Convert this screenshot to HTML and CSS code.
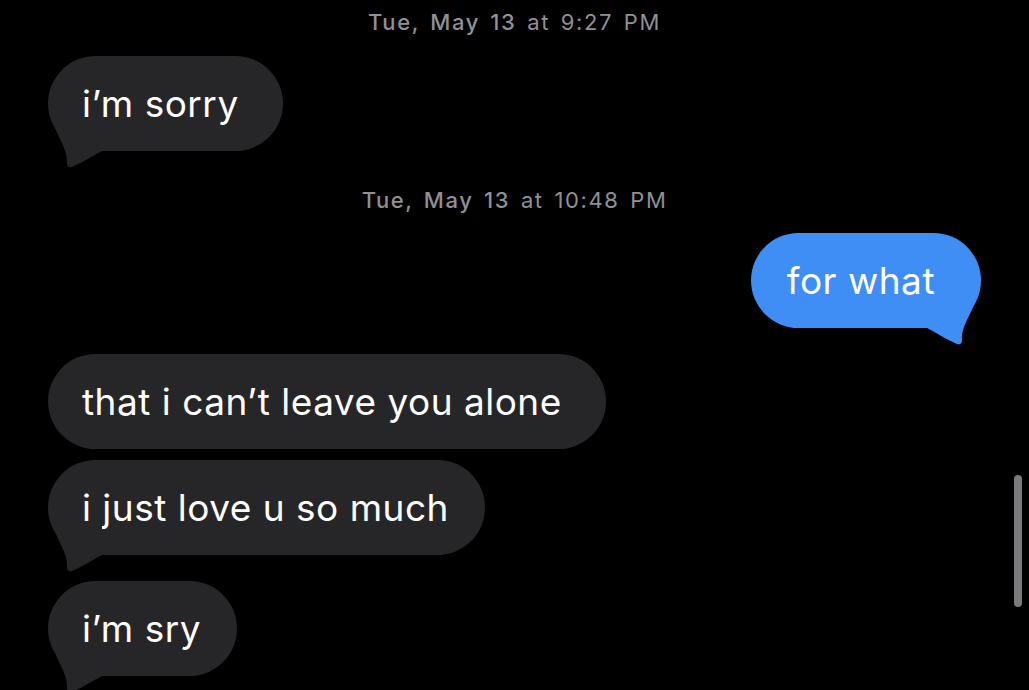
FILE: index.html
```html
<!DOCTYPE html>
<html>
<head>
<meta charset="utf-8">
<link rel="stylesheet" href="styles.css">
</head>
<body>
<div class="thread">
  <div class="stamp stamp-first"><b>Tue, May 13</b> at 9:27 PM</div>
  <div class="row in">
    <div class="bubble gray">i’m sorry
      <svg class="tail" viewBox="0 0 60 50" width="60" height="50"><path d="M4 0 C8 18 20 30 19 45 C19 49 21 50 24 49 C34 45 44 38 54 33 L54 0 Z"/></svg>
    </div>
  </div>
  <div class="stamp stamp-second"><b>Tue, May 13</b> at 10:48 PM</div>
  <div class="row out">
    <div class="bubble blue">for what
      <svg class="tail tail-out" viewBox="0 0 60 50" width="60" height="50"><path d="M4 0 C8 18 20 30 19 45 C19 49 21 50 24 49 C34 45 44 38 54 33 L54 0 Z"/></svg>
    </div>
  </div>
  <div class="row in gap-lg">
    <div class="bubble gray">that i can’t leave you alone</div>
  </div>
  <div class="row in gap-sm">
    <div class="bubble gray tight">i just love u so much
      <svg class="tail" viewBox="0 0 60 50" width="60" height="50"><path d="M4 0 C8 18 20 30 19 45 C19 49 21 50 24 49 C34 45 44 38 54 33 L54 0 Z"/></svg>
    </div>
  </div>
  <div class="row in gap-lg">
    <div class="bubble gray tight">i’m sry
      <svg class="tail" viewBox="0 0 60 50" width="60" height="50"><path d="M4 0 C8 18 20 30 19 45 C19 49 21 50 24 49 C34 45 44 38 54 33 L54 0 Z"/></svg>
    </div>
  </div>
</div>
<div class="scrollbar"></div>
</body>
</html>
```
FILE: styles.css
```css
html, body {
  margin: 0;
  padding: 0;
  background: #000;
  height: 690px;
  overflow: hidden;
}
body {
  font-family: Inter, "Noto Sans", sans-serif;
  position: relative;
}
.thread {
  display: flex;
  flex-direction: column;
  padding: 0 48px;
}
.stamp {
  text-align: center;
  color: #909096;
  font-size: 22px;
  letter-spacing: 1.6px;
  word-spacing: 3px;
  line-height: 30px;
  height: 30px;
}
.stamp b {
  font-weight: 500;
}
.stamp-first {
  margin-top: 7px;
  margin-bottom: 19px;
}
.stamp-second {
  margin-top: 34px;
  margin-bottom: 18px;
}
.row {
  display: flex;
}
.row.out {
  justify-content: flex-end;
}
.gap-lg {
  margin-top: 26px;
}
.gap-sm {
  margin-top: 11px;
}
.bubble {
  position: relative;
  height: 95px;
  box-sizing: border-box;
  display: flex;
  align-items: center;
  padding: 0 44px 0 34px;
  border-radius: 48px;
  font-size: 37px;
  letter-spacing: 0.5px;
  color: #fff;
  white-space: nowrap;
}
.bubble.tight {
  padding-right: 36px;
}
.gray {
  background: #262628;
}
.gray .tail {
  fill: #262628;
}
.blue {
  background: #3e8ef5;
  padding: 0 46px 0 36px;
}
.blue .tail {
  fill: #3e8ef5;
}
.tail {
  position: absolute;
  left: 0;
  bottom: -17px;
}
.tail-out {
  left: auto;
  right: 0;
  transform: scaleX(-1);
}
.scrollbar {
  position: absolute;
  left: 1014px;
  top: 475px;
  width: 8px;
  height: 132px;
  border-radius: 4px;
  background: #7a7a7c;
}
```
